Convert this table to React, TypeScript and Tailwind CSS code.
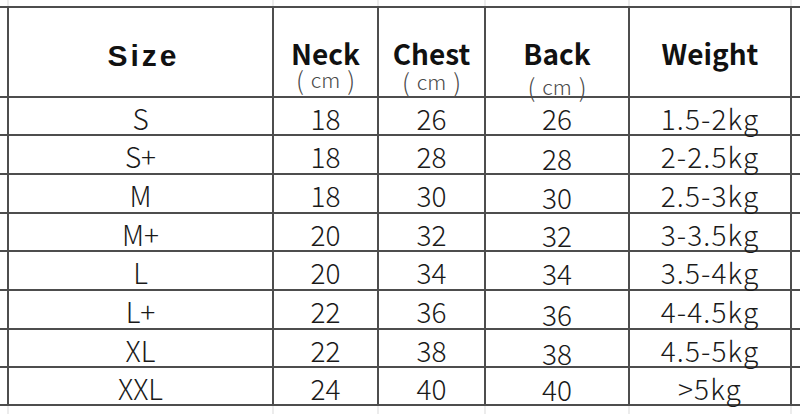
const columns = 'grid grid-cols-[7px_265px_105px_107px_144px_164px_8px]';

const rows = [
  { size: 'S', neck: '18', chest: '26', back: '26', weight: '1.5-2kg', h: 'h-[38px]', backPad: 'pt-[6px]' },
  { size: 'S+', neck: '18', chest: '28', back: '28', weight: '2-2.5kg', h: 'h-[39px]', backPad: 'pt-[8px]' },
  { size: 'M', neck: '18', chest: '30', back: '30', weight: '2.5-3kg', h: 'h-[39px]', backPad: 'pt-[8px]' },
  { size: 'M+', neck: '20', chest: '32', back: '32', weight: '3-3.5kg', h: 'h-[38px]', backPad: 'pt-[7px]' },
  { size: 'L', neck: '20', chest: '34', back: '34', weight: '3.5-4kg', h: 'h-[39px]', backPad: 'pt-[7px]' },
  { size: 'L+', neck: '22', chest: '36', back: '36', weight: '4-4.5kg', h: 'h-[39px]', backPad: 'pt-[9px]' },
  { size: 'XL', neck: '22', chest: '38', back: '38', weight: '4.5-5kg', h: 'h-[38px]', backPad: 'pt-[9px]' },
  { size: 'XXL', neck: '24', chest: '40', back: '40', weight: '>5kg', h: 'h-[38px]', backPad: 'pt-[7px]' },
];

function FaintStrip({ height }: { height: string }) {
  return (
    <div className={`${columns} ${height}`}>
      <div />
      <div className="border-l-2 border-[#ececec]" />
      <div className="border-l-2 border-[#ececec]" />
      <div className="border-l-2 border-[#ececec]" />
      <div className="border-l-2 border-[#ececec]" />
      <div className="border-x-2 border-[#ececec]" />
      <div />
    </div>
  );
}

// "( cm )" under the measurement headings
function Unit({ gap }: { gap: string }) {
  return (
    <div className={`flex items-center gap-[7px] leading-[22px] font-light text-[#4a4a4a] ${gap}`}>
      <span className="text-[25px]">(</span>
      <span className="text-[21px]">cm</span>
      <span className="text-[25px]">)</span>
    </div>
  );
}

function HeadCell({ title, unitGap, extra }: { title: string; unitGap?: string; extra?: string }) {
  return (
    <div className={`flex flex-col items-center pt-[31px] ${extra ?? 'border-l-2 border-[#4d4d4d]'}`}>
      <div className="text-[28px] font-bold leading-[28px] text-[#111]">{title}</div>
      {unitGap && <Unit gap={unitGap} />}
    </div>
  );
}

export default function App() {
  const cell = 'flex justify-center border-l-2 border-[#4d4d4d] text-[28px] leading-none font-light text-[#1a1a1a]';

  return (
    <div
      className="w-[800px] h-[414px] bg-white overflow-hidden"
      style={{ fontFamily: '"Noto Sans CJK SC", "Noto Sans", sans-serif' }}
    >
      <FaintStrip height="h-[6px]" />

      <div className={`${columns} h-[92px] border-y-2 border-[#4d4d4d]`}>
        <div />
        <div className="flex justify-center border-l-2 border-[#4d4d4d] pt-[33px]">
          <div
            className="text-[30px] font-bold leading-none tracking-[0.1em] text-[#111] pl-[6px]"
            style={{ fontFamily: '"Liberation Sans", sans-serif' }}
          >
            Size
          </div>
        </div>
        <HeadCell title="Neck" unitGap="mt-[1px]" />
        <HeadCell title="Chest" unitGap="mt-[3px]" />
        <HeadCell title="Back" unitGap="mt-[8px]" />
        <HeadCell title="Weight" extra="border-x-2 border-[#4d4d4d]" />
        <div />
      </div>

      {rows.map((r) => (
        <div key={r.size} className={`${columns} ${r.h} border-b-2 border-[#4d4d4d]`}>
          <div />
          <div className={`${cell} pt-[6px]`}>{r.size}</div>
          <div className={`${cell} pt-[6px]`}>{r.neck}</div>
          <div className={`${cell} pt-[6px]`}>{r.chest}</div>
          <div className={`${cell} ${r.backPad}`}>{r.back}</div>
          <div className={`${cell} pt-[6px] border-r-2 tracking-[0.04em]`}>{r.weight}</div>
          <div />
        </div>
      ))}

      <FaintStrip height="h-[8px]" />
    </div>
  );
}
